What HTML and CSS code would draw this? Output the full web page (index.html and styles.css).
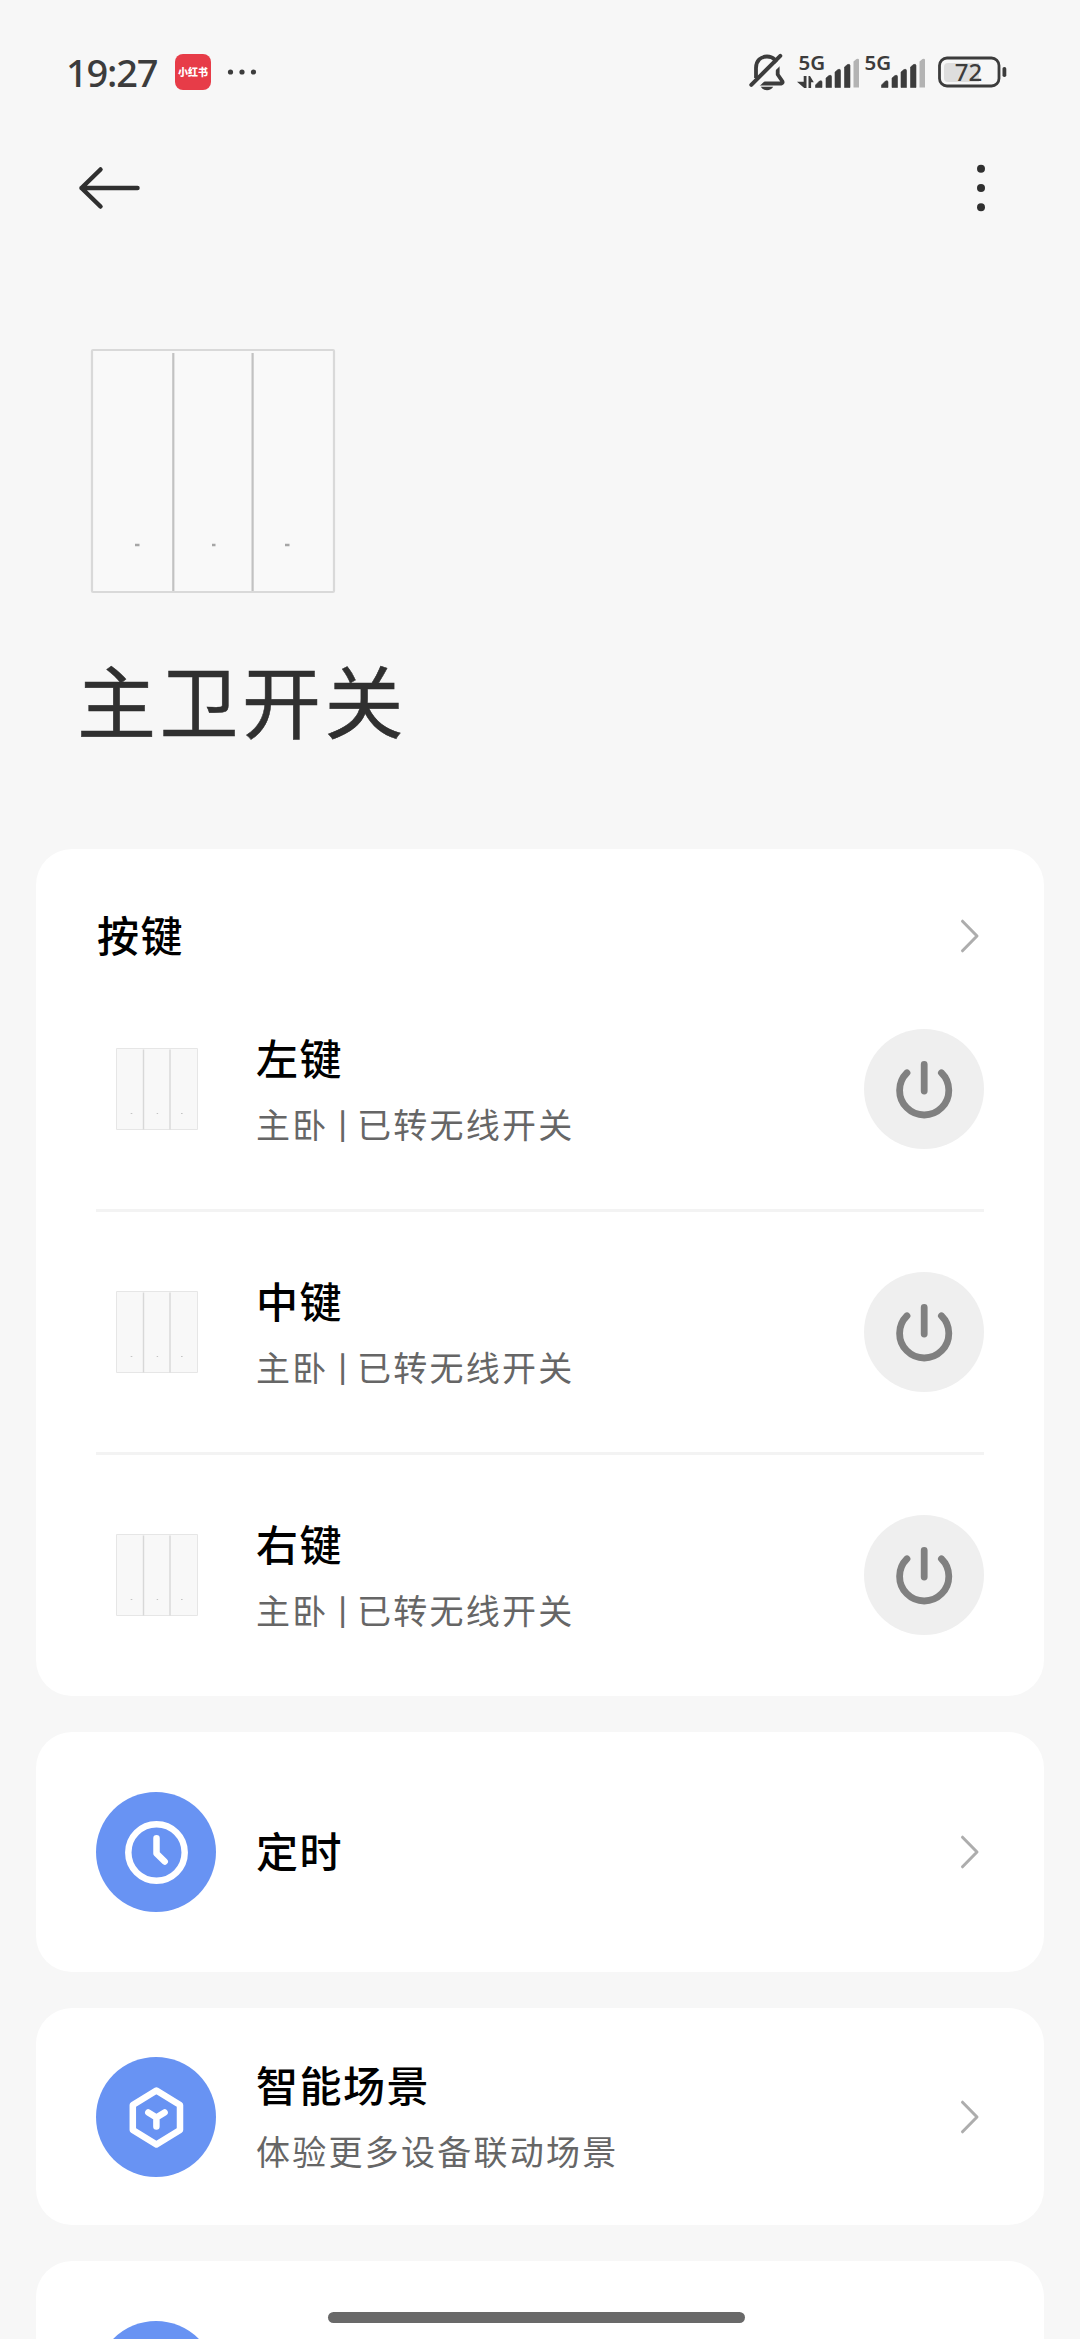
FILE: index.html
```html
<!DOCTYPE html>
<html lang="zh-CN">
<head>
<meta charset="utf-8">
<title>主卫开关</title>
<link rel="stylesheet" href="styles.css">
</head>
<body>
<svg width="0" height="0" class="sprite" aria-hidden="true">
  <symbol id="chevron" viewBox="0 0 20 36"><path d="M2.5 3.2 17 18 2.5 32.8" fill="none" stroke="#adadad" stroke-width="3" stroke-linecap="round" stroke-linejoin="round"/></symbol>
  <symbol id="power" viewBox="0 0 120 120"><path d="M43 43.8A24.6 24.6 0 1 0 77.4 43.8M60.2 35.500v26.500" fill="none" stroke="#808080" stroke-width="6.8" stroke-linecap="round"/></symbol>
  <symbol id="panel" viewBox="0 0 82 82"><path d="M.5.5h81v81H.5z" fill="#f8f8f8" stroke="#e6e6e6"/><path d="M27.5 1.5v80M54 1.5v80" stroke="#d8d8d8" stroke-width="1.4"/><path d="M14.7 65.5h1.6M40.7 65.5h1.4M65 65.5h1.6" stroke="#c4c4c4" stroke-width="1.2"/></symbol>
</svg>
<div class="screen">
  <header class="status">
    <div class="status-left">
      <span class="time">19:27</span>
      <span class="app">小红书</span>
      <svg class="dots" width="30" height="8" viewBox="0 0 30 8" fill="#3c3c3c"><circle cx="3.5" cy="4" r="2.6"/><circle cx="15" cy="4" r="2.6"/><circle cx="26.5" cy="4" r="2.6"/></svg>
    </div>
    <div class="status-right">
      <svg width="36" height="40" viewBox="0 0 36 40">
        <path d="M7 26V16C7 8.500 12 4.500 18 4.500S28.500 8.500 28.700 16V22.500L33.500 29.500Q34 31 32.500 31.500H10" fill="none" stroke="#3c3c3c" stroke-width="3.800" stroke-linejoin="round"/>
        <path d="M11.800 34.800h12.400q-2 3.400-6.200 3.400t-6.200-3.400z" fill="#3c3c3c"/>
        <path d="M5.500 35.500 35.500 6" stroke="#f7f7f7" stroke-width="5"/>
        <path d="M2.300 32.800 31.300 3.800" stroke="#3c3c3c" stroke-width="4" stroke-linecap="round"/>
      </svg>
      <svg class="signal" width="66" height="40" viewBox="0 0 66 40" fill="#3c3c3c">
        <text x="1.500" y="17.500" class="net">5G</text>
        <path d="M9.500 24v12H7.200L0 29.800h6.700V24zM11.500 36V24H13l3.800 6.200H14.100V36z"/>
        <path d="M18.500 35.500v-2.500l4-4q2.500-1 2.500 1v5.500zM29 35.500V26l3-2.500q2.500-.8 2.500 1v11zM38 35.500V20l3-2.500q2.500-.8 2.500 1v17zM47.500 35.500V15l3-2.500q2.500-.8 2.500 1v22z" stroke="#3c3c3c" stroke-width=".6"/>
        <path d="M56.500 35.500V9.500l3-2.500q2.500-.8 2.500 1v27.500z" fill="#b3b3b3"/>
      </svg>
      <svg class="signal" width="66" height="40" viewBox="0 0 66 40" fill="#3c3c3c">
        <text x="1.500" y="17.500" class="net">5G</text>
        <path d="M18.500 35.500v-2.500l4-4q2.500-1 2.500 1v5.500zM29 35.500V26l3-2.500q2.500-.8 2.500 1v11zM38 35.500V20l3-2.500q2.500-.8 2.500 1v17zM47.500 35.500V15l3-2.500q2.500-.8 2.500 1v22z" stroke="#3c3c3c" stroke-width=".6"/>
        <path d="M56.500 35.500V9.500l3-2.500q2.500-.8 2.500 1v27.500z" fill="#b3b3b3"/>
      </svg>
      <svg class="battery" width="70" height="40" viewBox="0 0 70 40">
        <path d="M10 11h31v19H10q-4 0-4-4V15q0-4 4-4z" fill="#dedede"/>
        <rect x="1.500" y="6" width="59.500" height="28" rx="7.500" fill="none" stroke="#3c3c3c" stroke-width="2.800"/>
        <rect x="64.500" y="15" width="3.800" height="10" rx="1.800" fill="#3c3c3c"/>
        <text x="30.500" y="28.500" text-anchor="middle" class="level">72</text>
      </svg>
    </div>
  </header>
  <nav class="nav">
    <svg width="64" height="44" viewBox="0 0 64 44"><path d="M23.500 3.500 4.500 22 23.500 40.500M4.500 22H60.500" fill="none" stroke="#303030" stroke-width="4.500" stroke-linecap="round" stroke-linejoin="round"/></svg>
    <svg width="10" height="48" viewBox="0 0 10 48" fill="#303030"><circle cx="5" cy="4.700" r="4"/><circle cx="5" cy="24" r="4"/><circle cx="5" cy="43.300" r="4"/></svg>
  </nav>
  <section class="hero">
    <svg width="244" height="244" viewBox="0 0 244 244">
      <rect x="1" y="1" width="242" height="242" rx="1" fill="#f9f9f9" stroke="#d9d9d9" stroke-width="2.200"/>
      <path d="M82.300 4v238M161.600 4v238" stroke="#c2c2c2" stroke-width="2.200"/>
      <path d="M44 196h4.500M121 196h3.500M194 196h4.500" stroke="#a6a6a6" stroke-width="2.400"/>
    </svg>
    <h1>主卫开关</h1>
  </section>
  <main class="cards">
    <section class="card keys">
      <div class="head"><h2>按键</h2><svg class="chevron"><use href="#chevron"/></svg></div>
      <div class="row">
        <svg class="thumb"><use href="#panel"/></svg>
        <div class="text"><h2>左键</h2><p>主卧<span class="sep">|</span>已转无线开关</p></div>
        <button class="power" aria-label="左键开关"><svg><use href="#power"/></svg></button>
      </div>
      <div class="row">
        <svg class="thumb"><use href="#panel"/></svg>
        <div class="text"><h2>中键</h2><p>主卧<span class="sep">|</span>已转无线开关</p></div>
        <button class="power" aria-label="中键开关"><svg><use href="#power"/></svg></button>
      </div>
      <div class="row">
        <svg class="thumb"><use href="#panel"/></svg>
        <div class="text"><h2>右键</h2><p>主卧<span class="sep">|</span>已转无线开关</p></div>
        <button class="power" aria-label="右键开关"><svg><use href="#power"/></svg></button>
      </div>
    </section>
    <section class="card link timer">
      <span class="badge"><svg viewBox="0 0 120 120" fill="none" stroke="#fff" stroke-width="6.500" stroke-linecap="round" stroke-linejoin="round"><circle cx="60.500" cy="60.500" r="28.200"/><path d="M60.500 46.200V61.500L68.700 69.500"/></svg></span>
      <div class="text"><h2>定时</h2></div>
      <svg class="chevron"><use href="#chevron"/></svg>
    </section>
    <section class="card link scene">
      <span class="badge"><svg viewBox="0 0 120 120" fill="none" stroke="#fff" stroke-width="6.500" stroke-linecap="round" stroke-linejoin="round"><path d="M60.400 33.500 84 48v25L60.400 87.500 36.800 73V48z"/><path d="M52.300 55.500 60.400 60.500 68.600 55.500M60.400 60.500V69.500"/></svg></span>
      <div class="text"><h2>智能场景</h2><p>体验更多设备联动场景</p></div>
      <svg class="chevron"><use href="#chevron"/></svg>
    </section>
    <section class="card link next">
      <span class="badge"></span>
    </section>
  </main>
  <div class="home"></div>
</div>
</body>
</html>
```
FILE: styles.css
```css
* { box-sizing: border-box; }
body {
  margin: 0;
  background: #f7f7f7;
  font-family: "Noto Sans CJK SC", sans-serif;
  color: #000;
}
h1, h2, p { margin: 0; }
svg { display: block; flex: none; overflow: visible; }
.sprite { position: absolute; }
.screen {
  position: relative;
  width: 1080px;
  height: 2339px;
  overflow: hidden;
  display: flex;
  flex-direction: column;
}
.status, .nav, .hero, .cards { flex: none; }
.status {
  height: 144px;
  padding: 0 72px 0 65px;
  display: flex;
  justify-content: space-between;
  align-items: center;
  color: #3c3c3c;
}
.status-left, .status-right { display: flex; align-items: center; }
.time {
  width: 110px;
  padding-left: 1px;
  font: 500 38px/46px "Noto Sans", sans-serif;
  letter-spacing: -1.200px;
}
.app {
  width: 36px;
  height: 36px;
  border-radius: 8px;
  background: #e73c48;
  color: #fff;
  font-size: 10px;
  font-weight: 900;
  line-height: 35px;
  text-align: center;
  white-space: nowrap;
}
.dots { margin-left: 16px; }
.status-right > svg:first-child { margin: 0 13px 0 -1px; }
.signal { margin-left: -1px; margin-right: 1px; }
.battery { margin-left: 8px; }
.net { font: 600 20.500px "Noto Sans", sans-serif; }
.level { font: 500 24px "Noto Sans", sans-serif; fill: #3c3c3c; }
.nav {
  height: 88px;
  padding: 0 94px 0 77px;
  display: flex;
  justify-content: space-between;
  align-items: center;
}
.hero { height: 617px; padding: 117px 0 0 77px; }
.hero svg { margin-left: 13.700px; }
h1 {
  margin-top: 46px;
  font-size: 79px;
  font-weight: 400;
  line-height: 120px;
  letter-spacing: 3.500px;
  color: #303030;
  -webkit-text-stroke: .5px #303030;
}
.cards { padding: 0 36px; display: flex; flex-direction: column; gap: 36px; }
.card { background: #fff; border-radius: 36px; padding: 0 60px; flex: none; }
.keys { height: 847px; }
.head {
  height: 120px;
  padding: 54px 0 0 1px;
  display: flex;
  justify-content: space-between;
  align-items: center;
}
h2 { padding-bottom: 4px; font-size: 42px; font-weight: 500; line-height: 56px; letter-spacing: 1.500px; }
p { margin-top: 11px; padding-bottom: 2px; font-size: 34px; line-height: 48px; letter-spacing: 2.250px; color: #666; }
.sep {
  display: inline-block;
  width: 28.500px;
  font-size: 28px;
  font-weight: 700;
  line-height: 30px;
  text-align: center;
  letter-spacing: 0;
  vertical-align: 4px;
}
.chevron { width: 20px; height: 36px; margin-right: 4.500px; }
.row { height: 243px; display: flex; align-items: center; border-bottom: 3px solid #f3f3f3; }
.row:last-child { border-bottom-color: transparent; }
.thumb { width: 82px; height: 82px; margin: 0 58px 0 20px; }
.text { flex: 1; }
.power { width: 120px; height: 120px; padding: 0; border: 0; border-radius: 50%; background: #efefef; }
.power svg, .badge svg { width: 120px; height: 120px; }
.link { display: flex; align-items: center; }
.badge { width: 120px; height: 120px; margin-right: 40px; border-radius: 50%; background: #6893f3; flex: none; }
.timer { height: 240px; }
.scene { height: 217px; }
.next { height: 240px; }
.home {
  position: absolute;
  left: 328px;
  top: 2312px;
  width: 417px;
  height: 11px;
  border-radius: 6px;
  background: #696969;
}
```
